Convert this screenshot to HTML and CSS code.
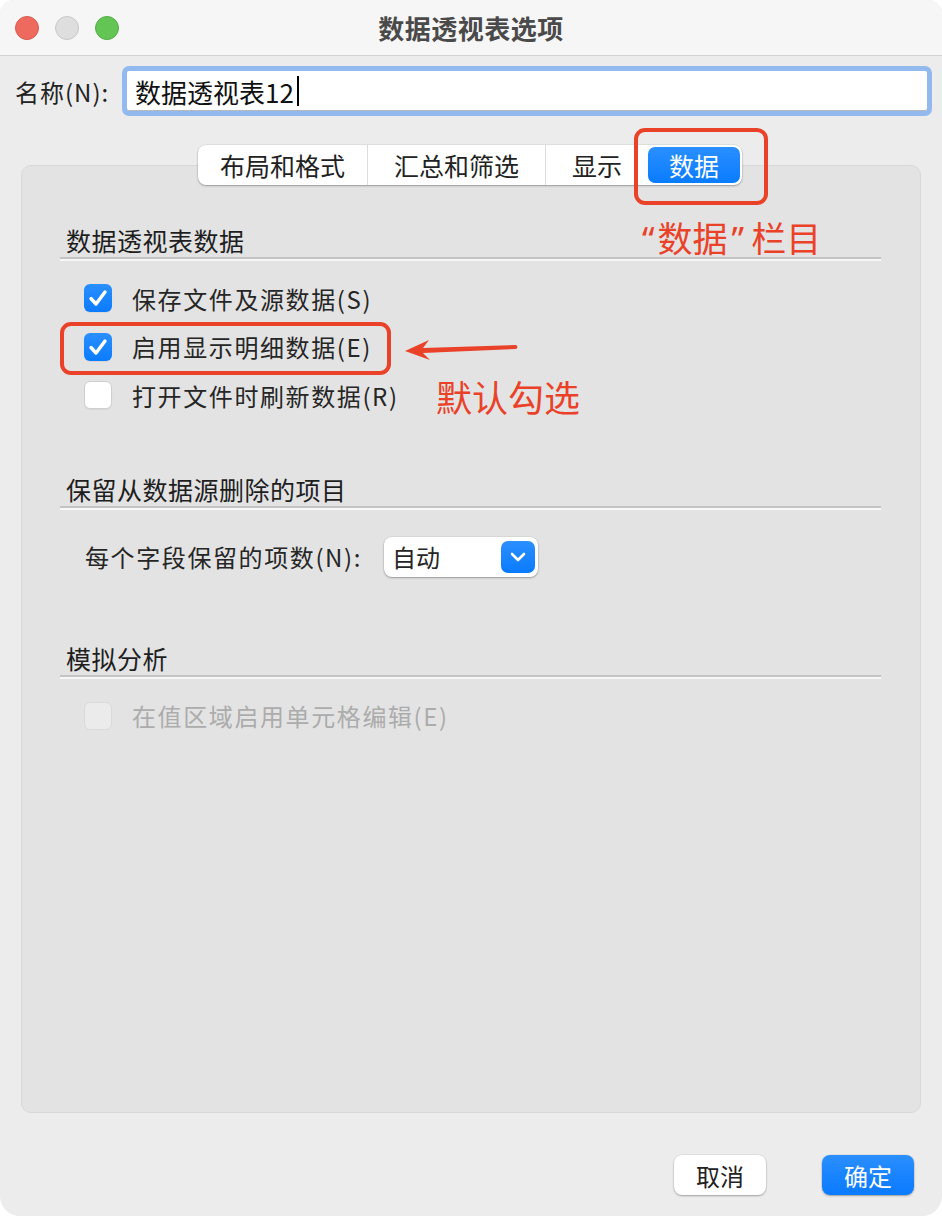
FILE: index.html
```html
<!DOCTYPE html>
<html lang="zh-CN">
<head>
    <meta charset="UTF-8">
    <meta name="viewport" content="width=device-width, initial-scale=1.0">
    <title>数据透视表选项</title>
    <link rel="stylesheet" href="styles.css">
</head>
<body>
<div class="window">
    <div class="titlebar">
        <div class="lights">
            <span class="light red"></span>
            <span class="light gray"></span>
            <span class="light green"></span>
        </div>
        <div class="title">数据透视表选项</div>
        <div></div>
    </div>

    <div class="name-row">
        <label class="name-label">名称(N):</label>
        <div class="name-field"><span>数据透视表12</span><i class="caret"></i></div>
    </div>

    <div class="panel">
        <div class="tabs">
            <div class="tab" style="width: 170px">布局和格式</div>
            <div class="tab" style="width: 178px">汇总和筛选</div>
            <div class="tab" style="width: 102px">显示</div>
            <div class="tab active">数据</div>
        </div>

        <div class="section first">
            <div class="section-title">数据透视表数据</div>
            <div class="checks">
                <div class="check-row"><span class="box on"></span>保存文件及源数据(S)</div>
                <div class="check-row"><span class="box on"></span>启用显示明细数据(E)</div>
                <div class="check-row"><span class="box"></span>打开文件时刷新数据(R)</div>
            </div>
        </div>

        <div class="section second">
            <div class="section-title">保留从数据源删除的项目</div>
            <div class="popup-row">
                <span>每个字段保留的项数(N):</span>
                <div class="popup">
                    <span>自动</span>
                    <span class="popup-btn">
                        <svg width="16" height="10" viewBox="0 0 16 10"><path d="M2 2 L8 8 L14 2" fill="none" stroke="#fff" stroke-width="2.6" stroke-linecap="round" stroke-linejoin="round"/></svg>
                    </span>
                </div>
            </div>
        </div>

        <div class="section third">
            <div class="section-title">模拟分析</div>
            <div class="checks">
                <div class="check-row disabled"><span class="box"></span>在值区域启用单元格编辑(E)</div>
            </div>
        </div>
    </div>

    <div class="buttons">
        <button class="btn">取消</button>
        <button class="btn primary">确定</button>
    </div>

    <!-- annotations drawn over the dialog -->
    <div class="mark mark-tab"></div>
    <div class="mark mark-row"></div>
    <div class="note note-tab"><span class="q open">“</span>数据<span class="q close">”</span>栏目</div>
    <div class="note note-default">默认勾选</div>
    <svg class="arrow" width="116" height="24" viewBox="0 0 116 24">
        <path d="M2 13 L26 2 L20 10 L113 7 Q116 9 113 11 L20 15 L27 22 Z" fill="#ea4129"/>
    </svg>
</div>
</body>
</html>
```

FILE: styles.css
```css
* {
    box-sizing: border-box;
}

html, body {
    margin: 0;
    background: #ffffff;
}

body {
    font-family: "Noto Sans CJK SC", "Noto Sans", sans-serif;
    color: #262626;
}

.window {
    position: relative;
    width: 942px;
    height: 1216px;
    background: #ececec;
    border-radius: 14px 14px 20px 20px;
    overflow: hidden;
}

.titlebar {
    height: 56px;
    background: #f6f6f6;
    border-bottom: 1px solid #d2d2d2;
    display: grid;
    grid-template-columns: 1fr auto 1fr;
    align-items: center;
}

.lights {
    display: flex;
    gap: 16px;
    padding-left: 15px;
}

.light {
    width: 24px;
    height: 24px;
    border-radius: 50%;
    border: 1px solid;
}
.light.red { background: #ee6a5f; border-color: #d65a4f; }
.light.gray { background: #dedede; border-color: #c8c8c8; }
.light.green { background: #62c554; border-color: #53ad46; }

.title {
    font-size: 26px;
    font-weight: bold;
    color: #4a4a4a;
    line-height: 1;
    letter-spacing: 0.5px;
}

.name-row {
    display: flex;
    align-items: center;
    height: 50px;
    margin-top: 10px;
    padding: 0 10px 0 15px;
    gap: 12px;
}

.name-label {
    width: 95px;
    font-size: 24px;
    letter-spacing: 1px;
    color: #222;
}

.name-field {
    flex: 1;
    height: 50px;
    border: 5px solid #93baee;
    border-radius: 7px;
    background: #fff;
    box-shadow: inset 0 -1px 0 #b8b8b8;
    display: flex;
    align-items: center;
    padding-left: 8px;
    font-size: 26px;
    color: #111;
}

.caret {
    display: inline-block;
    width: 2px;
    height: 30px;
    background: #000;
    margin-left: 3px;
}

.panel {
    margin: 49px 21px 0;
    height: 948px;
    background: #e3e3e3;
    border: 1px solid #d8d8d8;
    border-radius: 10px;
}

.tabs {
    display: flex;
    width: max-content;
    margin: -21px 0 0 176px;
    height: 40px;
    background: #fff;
    border-radius: 8px;
    box-shadow: 0 1px 2px rgba(0,0,0,0.3), 0 0 0 0.5px rgba(0,0,0,0.08);
    padding-right: 2px;
}

.tab {
    display: flex;
    align-items: center;
    justify-content: center;
    font-size: 25px;
    color: #222;
    border-right: 1px solid #dcdcdc;
}
.tab:nth-child(3) {
    border-right: none;
}

.tab.active {
    width: 92px;
    height: 36px;
    margin-top: 2px;
    color: #fff;
    border: none;
    border-radius: 7px;
    background: linear-gradient(#2a8fff, #0a7cff);
}

.section {
    margin: 0 39px 0 38px;
}
.section.first { margin-top: 38px; }
.section.second { margin-top: 52px; }
.section.third { margin-top: 64px; }

.section-title {
    font-size: 25px;
    line-height: 34px;
    padding-left: 6px;
    letter-spacing: 0.5px;
    color: #1e1e1e;
    border-bottom: 2px solid #c4c4c4;
    box-shadow: 0 2px 0 #f7f7f7;
}

.checks {
    margin-top: 15px;
    padding-left: 24px;
}

.check-row {
    display: flex;
    align-items: center;
    gap: 20px;
    height: 48.5px;
    font-size: 24px;
    letter-spacing: 1.6px;
    color: #262626;
}

.box {
    width: 28px;
    height: 28px;
    border-radius: 6px;
    background: #fff;
    border: 1px solid #cfcfcf;
    box-shadow: 0 1px 1px rgba(0,0,0,0.06);
}

.box.on {
    border: none;
    background-image: url("data:image/svg+xml,%3Csvg xmlns='http://www.w3.org/2000/svg' width='28' height='28'%3E%3Cpath d='M7 14.5 L12 20 L21 8' fill='none' stroke='white' stroke-width='3.4' stroke-linecap='round' stroke-linejoin='round'/%3E%3C/svg%3E"), linear-gradient(#2b8fff, #0a7bff);
}

.check-row.disabled {
    color: #acacac;
}
.check-row.disabled .box {
    background: #ebebeb;
    border-color: #d9d9d9;
    box-shadow: none;
}

.popup-row {
    display: flex;
    align-items: center;
    margin-top: 29px;
    padding-left: 25px;
    height: 40px;
    font-size: 24px;
    letter-spacing: 1.6px;
    gap: 22px;
}

.popup {
    width: 154px;
    height: 40px;
    background: #fff;
    border-radius: 8px;
    box-shadow: 0 1px 2px rgba(0,0,0,0.3), 0 0 0 0.5px rgba(0,0,0,0.08);
    display: flex;
    align-items: center;
    justify-content: space-between;
    padding: 0 3px 0 8px;
    letter-spacing: 0;
}

.popup-btn {
    width: 34px;
    height: 32px;
    border-radius: 7px;
    background: linear-gradient(#2b8fff, #0a7bff);
    display: flex;
    align-items: center;
    justify-content: center;
}

.buttons {
    display: flex;
    justify-content: flex-end;
    gap: 56px;
    margin-top: 42px;
    padding-right: 28px;
}

.btn {
    width: 92px;
    height: 40px;
    border: none;
    border-radius: 8px;
    background: #fff;
    font-family: inherit;
    font-size: 24px;
    color: #222;
    box-shadow: 0 1px 2px rgba(0,0,0,0.3), 0 0 0 0.5px rgba(0,0,0,0.08);
    padding: 0;
}

.btn.primary {
    color: #fff;
    background: linear-gradient(#2a8fff, #0a7aff);
}

.mark {
    position: absolute;
    border: 4px solid #ea4129;
    border-radius: 11px;
}
.mark-tab {
    left: 634px;
    top: 128px;
    width: 134px;
    height: 77px;
}
.mark-row {
    left: 60px;
    top: 322px;
    width: 331px;
    height: 53px;
}

.note {
    position: absolute;
    color: #ea4129;
    font-size: 35px;
    line-height: 1;
}
.note .q {
    font-family: "Noto Sans", sans-serif;
}
.note .q.open {
    margin-right: 3px;
}
.note .q.close {
    margin: 0 7px 0 4px;
}
.note-tab {
    left: 642px;
    top: 219px;
}
.note-default {
    left: 436px;
    top: 378px;
    font-size: 36px;
}

.arrow {
    position: absolute;
    left: 403px;
    top: 338px;
}
```
